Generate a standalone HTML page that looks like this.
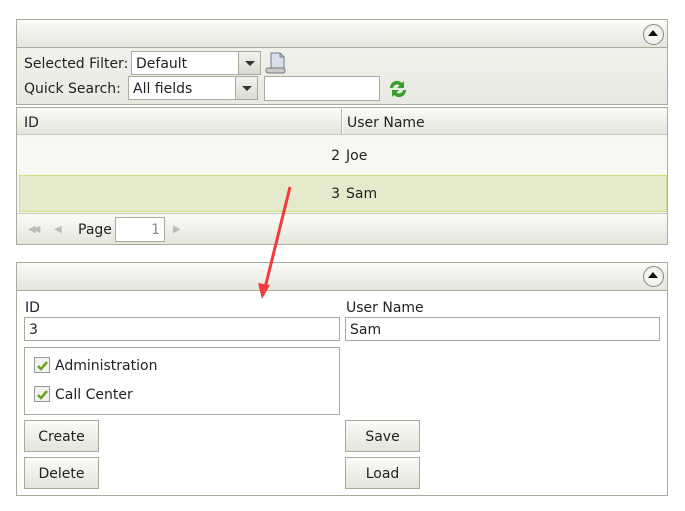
<!DOCTYPE html>
<html><head><meta charset="utf-8"><style>
*{box-sizing:border-box;margin:0;padding:0}
body{width:685px;height:511px;background:#fff;font-family:"DejaVu Sans","Liberation Sans",sans-serif;font-size:14px;color:#222;position:relative;overflow:hidden}
.a{position:absolute}
.hdr{background:linear-gradient(#fbfbf8,#e4e6dc);}
.box{border:1px solid #a9ab9d}
.inp{position:absolute;background:#fff;border:1px solid #a9ab9d;padding:3px 4px 1px;line-height:18px}
.btn{position:absolute;border:1px solid #a9ab9d;background:linear-gradient(#fbfbf8,#e3e5da);text-align:center;line-height:32px}
.dd{position:absolute;width:22px;top:0;bottom:0;right:0;background:linear-gradient(#f3f3ee,#d9dbd0);border-left:1px solid #a9ab9d}
.dd:after{content:"";position:absolute;left:6px;top:9px;border:5px solid transparent;border-top:5px solid #333}
.col{position:absolute;width:21px;height:21px;border-radius:50%;border:1px solid #888;background:radial-gradient(#fff,#e6e6e0)}
.col:after{content:"";position:absolute;left:4px;top:5px;border:5px solid transparent;border-bottom:6px solid #111;border-top:0}
.cb{position:absolute;width:16px;height:16px;border:1px solid #999;background:#f2f2ee}
</style></head><body>
<div class="a box" style="left:16px;top:19px;width:652px;height:86px;background:#eef0e8"></div>
<div class="a hdr" style="left:17px;top:20px;width:650px;height:28px;border-bottom:1px solid #a9ab9d"></div>
<div class="col" style="left:643px;top:24px"></div>
<div class="a" style="left:17px;top:49px;width:650px;height:55px;background:linear-gradient(#f0f1ea,#e8eae2)"></div>
<div class="a" style="left:24px;top:54px;line-height:20px">Selected Filter:</div>
<div class="inp" style="left:131px;top:51px;width:130px;height:24px">Default<div class="dd"></div></div>
<svg class="a" style="left:265px;top:51px" width="22" height="24"><path d="M6 2h9l4 4v14H6z" fill="#d9e0ea" stroke="#6b7a90"/><path d="M15 2v4h4" fill="none" stroke="#6b7a90"/><rect x="1" y="17" width="19" height="5" rx="2" fill="#c8cbc6" stroke="#777"/></svg>
<div class="a" style="left:24px;top:79px;line-height:20px">Quick Search:</div>
<div class="inp" style="left:128px;top:76px;width:130px;height:24px">All fields<div class="dd"></div></div>
<div class="inp" style="left:264px;top:76px;width:116px;height:25px"></div>
<svg class="a" style="left:387px;top:78px" width="22" height="22"><path d="M3 10a7 7 0 0 1 12-5l2-2v7h-7l2.5-2.5a4 4 0 0 0-6.5 2.5z M19 12a7 7 0 0 1-12 5l-2 2v-7h7l-2.5 2.5a4 4 0 0 0 6.5-2.5z" fill="#3a9e2e"/></svg>
<div class="a box" style="left:16px;top:107px;width:652px;height:138px;background:#f6f6f3"></div>
<div class="a hdr" style="left:17px;top:108px;width:650px;height:27px;border-bottom:1px solid #c6c8bc"></div>
<div class="a" style="left:341px;top:109px;width:2px;height:25px;border-left:1px solid #b5b7aa;border-right:1px solid #fff"></div>
<div class="a" style="left:24px;top:114px;line-height:18px">ID</div>
<div class="a" style="left:347px;top:114px;line-height:18px">User Name</div>
<div class="a" style="left:17px;top:137px;width:650px;height:36px;background:#f7f7f4"></div>
<div class="a" style="left:320px;top:147px;width:20px;text-align:right;line-height:18px">2</div>
<div class="a" style="left:346px;top:147px;line-height:18px">Joe</div>
<div class="a" style="left:19px;top:175px;width:648px;height:37px;background:#e4eacb;border:1px dotted #b9cf6a"></div>
<div class="a" style="left:320px;top:185px;width:20px;text-align:right;line-height:18px">3</div>
<div class="a" style="left:346px;top:185px;line-height:18px">Sam</div>
<div class="a hdr" style="left:17px;top:213px;width:650px;height:31px;border-top:1px solid #c6c8bc"></div>
<div class="a" style="left:28px;top:224px;color:#bbb;font-size:10px;letter-spacing:-3px">◀◀</div>
<div class="a" style="left:54px;top:224px;color:#bbb;font-size:10px">◀</div>
<div class="a" style="left:78px;top:221px;line-height:18px">Page</div>
<div class="inp" style="left:115px;top:217px;width:50px;height:25px;text-align:right;color:#888">1</div>
<div class="a" style="left:173px;top:224px;color:#bbb;font-size:10px">▶</div>
<div class="a box" style="left:16px;top:262px;width:652px;height:234px"></div>
<div class="a hdr" style="left:17px;top:263px;width:650px;height:28px;border-bottom:1px solid #a9ab9d"></div>
<div class="col" style="left:643px;top:266px"></div>
<div class="a" style="left:25px;top:299px;line-height:18px">ID</div>
<div class="a" style="left:346px;top:299px;line-height:18px">User Name</div>
<div class="inp" style="left:24px;top:317px;width:316px;height:24px">3</div>
<div class="inp" style="left:345px;top:317px;width:315px;height:24px">Sam</div>
<div class="a box" style="left:24px;top:347px;width:316px;height:68px"></div>
<div class="cb" style="left:34px;top:357px"></div>
<svg class="a" style="left:36px;top:359px" width="13" height="13"><path d="M2 7l3 3 6-7" fill="none" stroke="#6aa324" stroke-width="2.5"/></svg>
<div class="a" style="left:55px;top:357px;line-height:18px">Administration</div>
<div class="cb" style="left:34px;top:386px"></div>
<svg class="a" style="left:36px;top:388px" width="13" height="13"><path d="M2 7l3 3 6-7" fill="none" stroke="#6aa324" stroke-width="2.5"/></svg>
<div class="a" style="left:55px;top:386px;line-height:18px">Call Center</div>
<div class="btn" style="left:24px;top:420px;width:75px;height:32px">Create</div>
<div class="btn" style="left:24px;top:457px;width:75px;height:32px">Delete</div>
<div class="btn" style="left:345px;top:420px;width:75px;height:32px">Save</div>
<div class="btn" style="left:345px;top:457px;width:75px;height:32px">Load</div>
<svg class="a" style="left:0;top:0" width="685" height="511"><line x1="290" y1="187" x2="265" y2="288" stroke="#f03c3c" stroke-width="3"/><path d="M258 283l4 16 8-14z" fill="#f03c3c"/></svg>
</body></html>
